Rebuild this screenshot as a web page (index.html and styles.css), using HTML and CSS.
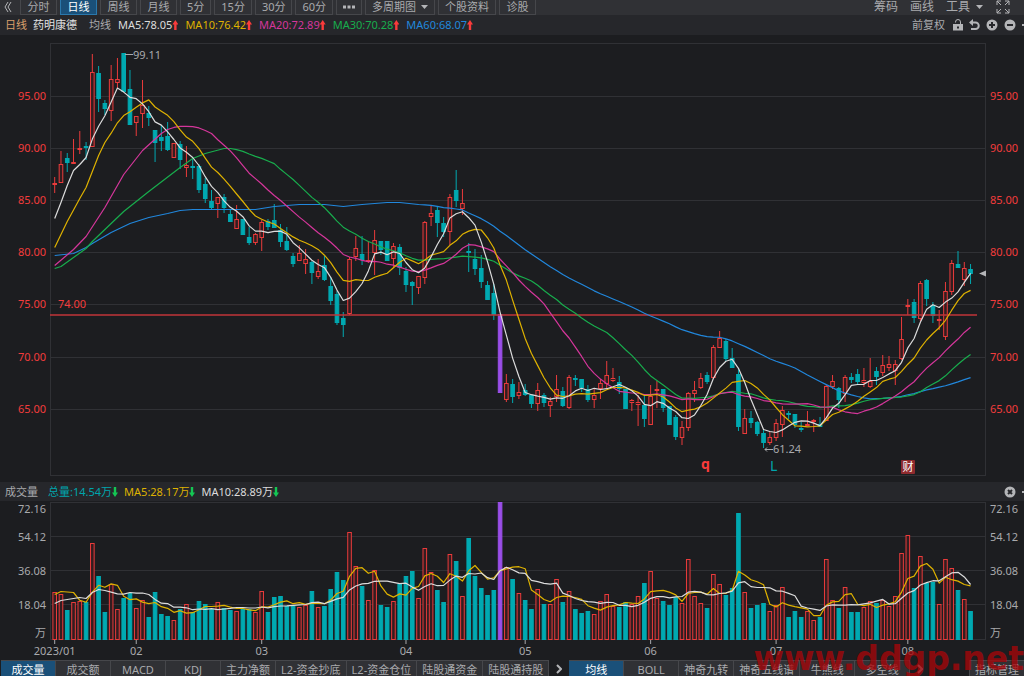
FILE: index.html
```html
<!DOCTYPE html>
<html lang="zh-CN">
<head>
    <meta charset="UTF-8">
    <meta name="viewport" content="width=device-width, initial-scale=1.0">
    <title>药明康德 日线</title>
    <link rel="stylesheet" href="styles.css">
</head>
<body>
    <header class="toolbar">
        <button class="flat" aria-label="收起">
            <svg width="8" height="12" viewBox="0 0 8 12"><path d="M4 1L1 6l3 5M7 1L4 6l3 5"/></svg>
        </button>
        <nav class="periods">
            <button>分时</button>
            <button class="active">日线</button>
            <button>周线</button>
            <button>月线</button>
            <button class="narrow">5分</button>
            <button>15分</button>
            <button>30分</button>
            <button>60分</button>
            <button class="narrow" aria-label="更多"><svg width="12" height="4" viewBox="0 0 12 4"><path class="solid" d="M0 0.500h3v3H0zM4.500 0.500h3v3h-3zM9 0.500h3v3H9z"/></svg></button>
            <span class="drop boxed">
                <select aria-label="多周期图"><option>多周期图</option></select>
                <svg width="7" height="4" viewBox="0 0 7 4"><path class="solid" d="M0 0h7L3.500 4z"/></svg>
            </span>
            <button>个股资料</button>
            <button>诊股</button>
        </nav>
        <div class="tools">
            <button class="flat">筹码</button>
            <button class="flat">画线</button>
            <span class="drop">
                <select aria-label="工具"><option>工具</option></select>
                <svg width="7" height="4" viewBox="0 0 7 4"><path class="solid" d="M0 0h7L3.500 4z"/></svg>
            </span>
            <button class="flat full" aria-label="全屏">
                <svg width="14" height="14" viewBox="0 0 14 14"><path d="M1 5V1h4M1 1l4 4M9 1h4v4M13 1L9 5M1 9v4h4M1 13l4-4M13 9v4H9M13 13L9 9"/></svg>
            </button>
        </div>
    </header>

    <div class="info">
        <span class="period">日线</span>
        <strong>药明康德</strong>
        <span class="kind">均线</span>
        <span class="ma white">MA5:78.05<i class="up"></i></span>
        <span class="ma yellow">MA10:76.42<i class="up"></i></span>
        <span class="ma pink">MA20:72.89<i class="up"></i></span>
        <span class="ma green">MA30:70.28<i class="up"></i></span>
        <span class="ma blue">MA60:68.07<i class="up"></i></span>
        <div class="actions">
            <span>前复权</span>
            <button class="flat" aria-label="锁定">
                <svg width="10" height="12" viewBox="0 0 10 12"><path d="M2.500 3.500V3a2.500 2.500 0 0 1 5 0v2.500"/><path class="solid" fill-rule="evenodd" d="M0 5h10v6.500H0zM4 7.500v2h2v-2z"/></svg>
            </button>
            <button class="flat" aria-label="撤销">
                <svg width="11" height="12" viewBox="0 0 11 12"><path class="thick" d="M2 3.500h4.500a3.200 3.200 0 0 1 0 6.500H2"/><path class="solid" d="M0 3.500L4 0v7z"/></svg>
            </button>
            <button class="flat" aria-label="放大">
                <svg width="12" height="12" viewBox="0 0 12 12"><circle class="solid" cx="6" cy="6" r="5.500"/><path class="cut" d="M3 6h6M6 3v6"/></svg>
            </button>
            <button class="flat" aria-label="缩小">
                <svg width="12" height="12" viewBox="0 0 12 12"><circle class="solid" cx="6" cy="6" r="5.500"/><path class="cut" d="M3 6h6"/></svg>
            </button>
            <i class="more"></i>
        </div>
    </div>

    <svg class="chart" id="price" viewBox="0 35 1024 447"></svg>

    <div class="info volume-info">
        <span class="kind">成交量</span>
        <span class="ma teal">总量:14.54万<i class="down"></i></span>
        <span class="ma yellow">MA5:28.17万<i class="down"></i></span>
        <span class="ma white">MA10:28.89万<i class="down"></i></span>
        <div class="actions">
            <button class="flat" aria-label="关闭">
                <svg width="12" height="12" viewBox="0 0 12 12"><circle class="solid" cx="6" cy="6" r="5.500"/><path class="cut" d="M4 4l4 4M8 4L4 8"/></svg>
            </button>
            <i class="more"></i>
        </div>
    </div>

    <svg class="chart" id="volume" viewBox="0 501 1024 159"></svg>

    <footer class="tabs">
        <button class="active">成交量</button>
        <button>成交额</button>
        <button>MACD</button>
        <button>KDJ</button>
        <button>主力净额</button>
        <button>L2-资金抄底</button>
        <button>L2-资金仓位</button>
        <button>陆股通资金</button>
        <button>陆股通持股</button>
        <button class="next" aria-label="下一组"><svg width="6" height="10" viewBox="0 0 6 10"><path class="thick" d="M1 1l4 4-4 4"/></svg></button>
        <button class="active">均线</button>
        <button>BOLL</button>
        <button>神奇九转</button>
        <button>神奇五线谱</button>
        <button>牛熊线</button>
        <button>多空线</button>
        <button class="next" aria-label="下一组"><svg width="6" height="10" viewBox="0 0 6 10"><path class="thick" d="M1 1l4 4-4 4"/></svg></button>
        <button class="manage">指标管理</button>
    </footer>
    <div class="watermark">www.ddgp.net</div>

    <script src="chart.js"></script>
</body>
</html>
```

FILE: styles.css
```css
* {
    box-sizing: border-box;
}

body {
    margin: 0;
    height: 100vh;
    overflow: hidden;
    position: relative;
    background-color: #1c1d20;
    color: #a9aaad;
    font-family: "Noto Sans", "Noto Sans CJK SC", sans-serif;
    font-size: 11px;
    line-height: 16px;
}

button,
select {
    font: inherit;
    color: inherit;
    background: none;
    border: none;
    padding: 0;
    margin: 0;
    cursor: pointer;
    white-space: nowrap;
}

select {
    appearance: none;
}

svg {
    display: block;
    fill: none;
    stroke: #b4b5b8;
}

button svg {
    margin: 0 auto;
}

.solid {
    fill: #b4b5b8;
    stroke: none;
}

.thick {
    stroke-width: 2;
}

.cut {
    stroke: #26272b;
    stroke-width: 2;
}

/* top toolbar */
.toolbar {
    display: flex;
    align-items: flex-end;
    height: 15px;
    padding: 0 14px 0 4px;
    overflow: hidden;
    background-color: #303135;
}

.toolbar > .flat {
    height: 16px;
}

.periods {
    display: flex;
    gap: 3px;
    margin-left: 8px;
}

.periods button,
.boxed {
    min-width: 37px;
    height: 16px;
    padding: 0 6px;
    line-height: 14px;
    border: 1px solid #46474b;
}

.periods .narrow {
    min-width: 26px;
}

.periods .active {
    color: #fff;
    background-color: #1a5079;
    border-color: #2a78ac;
}

.drop {
    display: flex;
    align-items: center;
    gap: 5px;
}

.tools {
    display: flex;
    align-items: center;
    gap: 12px;
    height: 16px;
    margin-left: auto;
    font-size: 12px;
}

.full {
    margin-left: 1px;
}

/* indicator lines over each chart */
.info {
    display: flex;
    align-items: center;
    height: 20px;
    padding: 0 0 0 5px;
    background-color: #26272b;
    white-space: nowrap;
}

.volume-info {
    height: 19px;
}

.period {
    color: #d9a06c;
}

.info strong {
    margin: 0 12px 0 6px;
    color: #e2e2e2;
    font-weight: 400;
}

.kind {
    margin-right: 7px;
}

.volume-info .kind {
    margin-right: 10px;
}

.ma {
    display: flex;
    align-items: center;
    margin-right: 7px;
}

.volume-info .ma {
    margin-right: 6px;
}

.white { color: #dcdcdc; }
.yellow { color: #dfb200; }
.pink { color: #d5369b; }
.green { color: #18ad4d; }
.blue { color: #2187dc; }
.teal { color: #00a5ad; }

.up,
.down {
    width: 6px;
    height: 10px;
    background-color: #fa3b3b;
    clip-path: polygon(50% 0, 100% 45%, 70% 45%, 70% 100%, 30% 100%, 30% 45%, 0 45%);
}

.down {
    background-color: #14c653;
    transform: rotate(180deg);
}

.actions {
    display: flex;
    align-items: center;
    gap: 6px;
    margin-left: auto;
}

.actions > span {
    margin-right: 2px;
}

.more {
    width: 2px;
    height: 2px;
    background-color: #b4b5b8;
}

/* charts */
.chart {
    width: 100%;
    height: auto;
}

.chart text {
    fill: #a9aaad;
    stroke: none;
    font-size: 11px;
}

.chart .axis-price {
    fill: #f23c3c;
}

.chart .end {
    text-anchor: end;
}

.chart .middle {
    text-anchor: middle;
}

.grid {
    stroke: #303135;
}

.tick {
    stroke: #a9aaad;
}

.r {
    fill: #331d20;
    stroke: #ea3b3b;
}

.g {
    fill: #00a9b1;
    stroke: #00a9b1;
}

.p {
    fill: #9a4ee8;
    stroke: #9a4ee8;
}

.line {
    fill: none;
    stroke: currentColor;
    stroke-width: 1.2;
    stroke-linejoin: round;
}

.level {
    stroke: #c03438;
    stroke-width: 1.5;
}

.chart .mark-q {
    fill: #fa3b3b;
    font-size: 14px;
    font-weight: 700;
}

.chart .mark-l {
    fill: #00a5ad;
    font-size: 14px;
}

.badge {
    fill: #8e2a2e;
    stroke: none;
}

.chart .badge-text {
    fill: #fff;
}

/* bottom tabs */
.tabs {
    display: flex;
    height: 17px;
    padding-left: 1px;
}

.tabs button {
    min-width: 55px;
    padding: 0 5px;
    line-height: 15px;
    background-color: #303135;
    border: solid #46474b;
    border-width: 1px 1px 0 0;
}

.tabs .active {
    color: #fff;
    background-color: #1a5079;
}

.tabs .next {
    min-width: 20px;
    padding: 0 5px;
    background: none;
    border: none;
}

.tabs .manage {
    margin-left: auto;
    border-width: 1px 0 0 1px;
}

.watermark {
    position: absolute;
    right: 0;
    bottom: 1px;
    color: rgba(165, 6, 10, 0.8);
    font: 700 33px/32px "DejaVu Sans", sans-serif;
    pointer-events: none;
}
```

FILE: chart.js
```js
// one row per day: colour, high, body top, body bottom, low, top of the volume bar
var days = [
    ['r',177,183,185,193,592], ['r',151,164,183,183,594], ['g',153,158,163,172,610], ['r',139,162,164,164,602],
    ['r',131,148,150,154,601], ['g',142,146,148,160,602], ['r',54,72,147,147,543], ['g',66,73,99,112,576],
    ['g',100,103,109,115,612], ['r',65,79,111,121,584], ['r',58,79,83,88,609], ['g',53,53,92,92,598],
    ['g',70,89,125,125,593], ['r',116,116,123,136,608], ['r',80,105,114,128,600], ['g',106,113,118,126,617],
    ['g',130,130,143,162,592], ['g',125,137,141,151,614], ['g',122,136,150,151,616], ['r',143,143,158,158,620],
    ['g',141,144,160,169,609], ['r',146,165,168,177,604], ['g',157,166,167,179,612], ['g',164,166,190,193,601],
    ['g',178,184,199,203,604], ['g',190,201,208,209,609], ['r',197,197,204,218,602], ['g',194,197,208,213,608],
    ['g',209,214,222,222,610], ['r',205,219,229,229,611], ['g',219,219,235,235,609], ['g',227,237,243,245,609],
    ['r',233,234,243,245,612], ['r',220,222,238,251,591], ['g',219,221,227,230,612], ['g',204,220,228,228,597],
    ['g',224,230,242,247,596], ['g',227,241,250,251,606], ['g',253,256,264,267,605], ['r',245,253,261,261,607],
    ['r',249,259,264,274,605], ['g',261,262,273,284,591], ['r',259,271,277,279,607], ['g',256,265,280,281,606],
    ['g',277,286,301,305,589], ['g',291,294,323,325,572], ['g',312,318,325,337,580], ['r',257,259,314,315,532],
    ['r',236,248,257,261,566], ['g',236,254,260,265,586], ['r',241,260,262,263,600], ['r',230,240,253,275,570],
    ['g',241,241,250,255,605], ['g',241,241,261,261,607], ['r',243,246,259,267,601], ['g',244,247,268,275,584],
    ['g',267,271,285,292,576], ['g',281,282,286,305,571], ['r',276,276,288,294,598], ['r',221,222,278,284,548],
    ['r',205,213,217,226,572], ['g',206,210,223,237,590], ['g',217,223,232,237,602], ['r',194,197,232,245,554],
    ['g',170,190,201,207,561], ['r',189,203,209,215,596], ['g',243,251,253,272,538], ['g',249,259,269,275,576],
    ['g',255,268,282,288,588], ['g',281,285,300,300,595], ['g',284,293,315,320,590], ['p',314,314,393,393,502],
    ['r',374,383,400,402,567], ['g',379,384,397,403,579], ['r',382,392,396,399,593], ['g',384,390,395,396,600],
    ['g',395,395,404,408,609], ['r',383,390,404,411,589], ['g',393,395,403,407,604], ['r',397,401,406,417,604],
    ['r',375,389,397,402,579], ['g',387,391,406,407,602], ['r',375,377,408,409,591], ['g',375,378,379,386,609],
    ['g',379,379,388,392,613], ['g',385,389,400,402,611], ['r',388,395,400,408,614], ['r',379,383,389,399,601],
    ['r',361,375,384,388,594], ['r',368,378,381,382,606], ['g',376,382,389,394,607], ['g',389,389,409,409,602],
    ['r',399,400,403,411,604], ['r',395,402,405,426,596], ['g',396,405,419,427,583], ['r',385,396,425,425,571],
    ['r',381,389,391,408,598], ['g',389,389,408,412,601], ['g',406,406,425,425,605], ['g',415,417,437,440,597],
    ['r',421,427,438,445,603], ['r',392,393,428,431,559], ['r',381,390,394,402,596], ['r',373,378,388,389,603],
    ['g',372,375,382,384,608], ['r',345,347,378,379,574], ['r',331,338,348,348,584], ['g',339,341,359,361,595],
    ['g',348,358,368,368,588], ['g',369,374,427,431,513], ['r',409,418,434,434,592], ['g',411,418,423,428,608],
    ['g',421,422,434,436,605], ['g',429,433,443,448,603], ['r',432,437,443,445,611], ['r',419,423,438,441,605],
    ['r',406,410,425,437,587], ['g',411,413,414,419,617], ['g',414,414,425,428,611], ['g',422,428,430,432,617],
    ['r',411,424,425,426,611], ['r',419,420,422,432,620], ['g',417,424,427,427,617], ['r',385,386,421,421,559],
    ['r',375,381,387,389,600], ['g',387,388,400,408,608], ['r',375,377,394,402,587], ['g',373,377,380,383,612],
    ['g',369,374,382,384,612], ['r',368,380,383,387,607], ['r',358,381,387,388,601], ['g',367,371,377,385,603],
    ['r',355,365,373,376,600], ['r',356,364,368,371,606], ['r',360,364,371,385,596], ['r',317,339,359,360,553],
    ['r',299,305,307,315,535], ['g',299,302,318,323,588], ['r',281,283,319,321,556], ['g',279,280,299,306,583],
    ['g',302,305,316,323,582], ['r',310,319,320,330,604], ['r',282,291,337,340,559], ['r',260,263,292,295,568],
    ['g',251,264,268,268,590], ['r',262,268,280,286,599], ['g',264,269,274,284,611]
];

// averages of the first days, which need prices from before the chart: [day, y]
var starts = {
    5: [[0,218],[1,202],[2,185],[3,170]],
    10: [[0,247],[2,221],[4,198],[5,187],[7,155],[8,142]],
    20: [[0,265],[3,249],[5,236],[8,207],[11,174],[14,150],[17,133],[18,129]],
    30: [[0,268],[1,266],[5,248],[6,241],[11,211],[15,191],[20,167],[22,158],[24,153],[27,148],[28,148]],
    60: [[0,255],[3,253],[5,247],[6,243],[9,232],[12,223],[15,217],[18,213],[20,210],[22,209],[32,209],
         [35,206],[39,204],[43,204],[46,206],[49,204],[53,202],[55,202],[58,204]]
};

var volumeStarts = {
    5: [[0,594],[1,591],[3,592]],
    10: [[0,603],[1,600],[4,597],[5,598],[6,592],[7,589],[8,590]]
};

var months = [[0,'2023/01'],[13,'02'],[33,'03'],[56,'04'],[75,'05'],[95,'06'],[115,'07'],[136,'08']];

function dayX(i) {
    return 54.7 + i * 6.273;
}

function line(x1, y1, x2, y2, cls) {
    return '<line class="' + cls + '" x1="' + x1 + '" y1="' + y1 + '" x2="' + x2 + '" y2="' + y2 + '"/>';
}

function text(x, y, str, cls) {
    return '<text class="' + cls + '" x="' + x + '" y="' + y + '">' + str + '</text>';
}

function bar(i, top, bottom, cls) {
    var h = Math.max(bottom - top - 1, 1);
    return '<rect class="' + cls + '" x="' + (dayX(i) - 1.8) + '" y="' + (top + 0.5) + '" width="3.600" height="' + h + '"/>';
}

function average(values, n, start, cls) {
    var points = start.map(function (p) {
        return dayX(p[0]) + ',' + (p[1] + 0.5);
    });
    for (var i = n - 1; i < values.length; i++) {
        var sum = 0;
        for (var j = i - n + 1; j <= i; j++) {
            sum += values[j];
        }
        points.push(dayX(i) + ',' + (sum / n + 0.5));
    }
    return '<polyline class="line ' + cls + '" points="' + points.join(' ') + '"/>';
}

function drawPrice() {
    var out = '<rect class="grid" x="50.500" y="43.500" width="935" height="432"/>';
    var ys = [96.5, 148.5, 200.5, 252.5, 304.5, 357.5, 409.5];
    ys.forEach(function (y, i) {
        var label = (95 - i * 5).toFixed(2);
        out += line(50, y, 985, y, 'grid');
        out += text(46, y + 3.5, label, 'axis-price end') + text(990, y + 3.5, label, 'axis-price');
    });
    days.forEach(function (d, i) {
        if (d[1] < d[2]) {
            out += line(dayX(i), d[1], dayX(i), d[2], d[0]);
        }
        if (d[4] > d[3]) {
            out += line(dayX(i), d[3], dayX(i), d[4], d[0]);
        }
        out += bar(i, d[2], d[3], d[0]);
    });
    // a rising day closes at the top of its body, a falling one at the bottom
    var closes = days.map(function (d) {
        return d[0] == 'r' ? d[2] : d[3];
    });
    out += line(50, 315, 977, 315, 'level') + text(58, 308, '74.00', 'axis-price');
    out += average(closes, 60, starts[60], 'blue');
    out += average(closes, 30, starts[30], 'green');
    out += average(closes, 20, starts[20], 'pink');
    out += average(closes, 10, starts[10], 'yellow');
    out += average(closes, 5, starts[5], 'white');

    out += line(125, 54.5, 133, 54.5, 'tick') + text(133, 59, '99.11', '');
    out += '<path class="tick" d="M773 449.500h-8M767 447.500l-2 2 2 2"/>' + text(773, 453, '61.24', '');
    out += '<path class="solid" d="M979 273.500l7-3v6z"/>';
    out += text(701, 469, 'q', 'mark-q') + text(770, 471, 'L', 'mark-l');
    out += '<rect class="badge" x="901" y="460" width="14" height="14" rx="1"/>' + text(908, 471, '财', 'badge-text middle');
    document.getElementById('price').innerHTML = out;
}

function drawVolume() {
    var out = '<rect class="grid" x="50.500" y="502.500" width="935" height="137"/>';
    [536.5, 570.5, 604.5].forEach(function (y) {
        out += line(50, y, 985, y, 'grid');
    });
    [['72.16',513],['54.12',541],['36.08',575],['18.04',609],['万',637]].forEach(function (l) {
        out += text(46, l[1], l[0], 'end') + text(990, l[1], l[0], '');
    });
    days.forEach(function (d, i) {
        out += bar(i, d[5], 640, d[0]);
    });
    var tops = days.map(function (d) {
        return d[5];
    });
    out += average(tops, 5, volumeStarts[5], 'yellow');
    out += average(tops, 10, volumeStarts[10], 'white');
    months.forEach(function (m) {
        out += line(dayX(m[0]), 640, dayX(m[0]), 644, 'tick') + text(dayX(m[0]), 655, m[1], 'middle');
    });
    document.getElementById('volume').innerHTML = out;
}

drawPrice();
drawVolume();
```
